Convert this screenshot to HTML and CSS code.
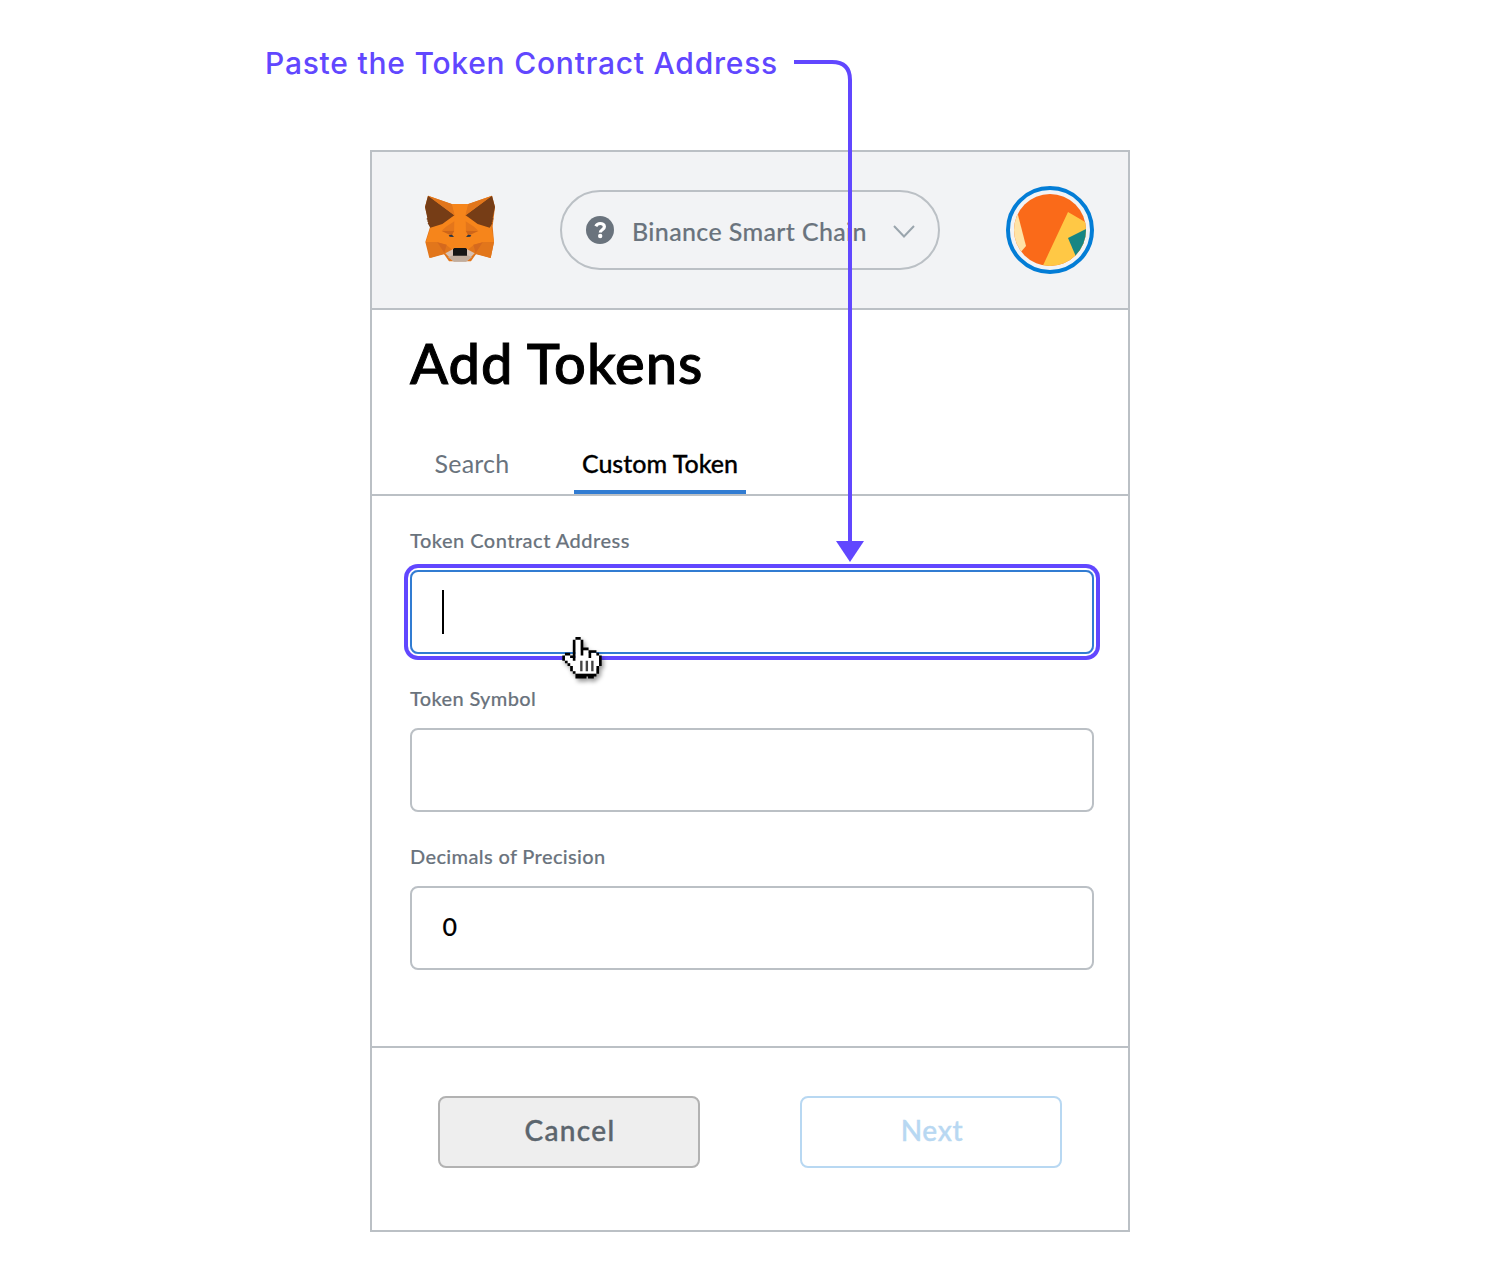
FILE: index.html
```html
<!DOCTYPE html>
<html lang="en">
<head>
<meta charset="utf-8">
<title>Add Tokens</title>
<link rel="stylesheet" href="styles.css">
</head>
<body>
<p class="caption">Paste the Token Contract Address</p>
<main class="wallet">
  <header class="topbar">
    <svg class="fox" viewBox="45 45 210 201">
      <path fill="#e2761b" d="M54 47 125 72h50l71-25 9 34-7 58 4 47-10 48-43-13-16 23h-66l-16-23-43 13-12-48 14-45-15-60z"/>
      <path fill="#f6851b" d="M125 72h50l-9 35 78 34 8 45-34 1-26 7-20 16h-44l-20-16-26-7-34-1 14-45 72-35z"/>
      <path fill="#763d16" d="m54 47 79 59-36 26-36 11-8-13 2-4-4-2 2-4-4-3 3-3-7-33zm192 0-79 59 36 26 36 11 8-13-2-4 4-2-2-4 4-3-3-3 7-33z"/>
      <path fill="#e2761b" d="m54 47 71 25 8 34zM246 47l-71 25-8 34zM48 186h34l26 35-47 13zm204 0h-34l-26 35 50 13z"/>
      <path fill="#d5691e" d="M82 187l28 7-7 25zm136 0-28 7 7 25z"/>
      <path fill="#e4761b" d="m108 140 25-16v28H95zm84 0-25-16v28h38z"/>
      <path fill="#ce6518" d="m95 153 38-1-8 15zm110 0-38-1 8 15z"/>
      <path fill="#f6851b" d="M135 105h30l4 102h-38z"/>
      <path fill="#d7c1b3" d="m106 220 25-14h38l25 14-26 25h-36z"/>
      <path fill="#c0ad9e" d="m114 232 16-7h41l15 7-18 13h-36z"/>
      <path fill="#233447" d="m116 166 10-2 6 7-13-1zm68 0-10-2-6 7 13-1z"/>
      <path fill="#161616" d="m133 204 34 0 4 3v20h-42v-20z"/>
    </svg>
    <div class="network">
      <svg class="help" viewBox="0 0 28 28"><circle cx="14" cy="14" r="14" fill="#6a737d"/><path d="M9.8 10.2C10.8 8.2 12.2 7.5 14.2 7.5c2.2 0 4.2 1.2 4.2 3.2 0 3.1-4.1 2.9-4.1 5.8" fill="none" stroke="#fff" stroke-width="3.2"/><circle cx="14.2" cy="20" r="2.2" fill="#fff"/></svg>
      <span class="network-name">Binance Smart Chain</span>
      <svg class="chevron" viewBox="0 0 22 13"><path d="m1 1 10 10.5L21 1" fill="none" stroke="#9aa5ad" stroke-width="2"/></svg>
    </div>
    <svg class="avatar" viewBox="0 0 88 88">
      <defs><clipPath id="face"><circle cx="44" cy="44" r="36"/></clipPath></defs>
      <circle cx="44" cy="44" r="42" fill="#f2f3f5" stroke="#037dd6" stroke-width="4"/>
      <g clip-path="url(#face)"><path fill="#fa6a19" d="M0 0h88v88H0z"/><path fill="#ffe3a5" d="M0 14h7l5 15 8 31-6 7L0 80z"/><path fill="#ffc845" d="m62 26 26 15v47H33z"/><path fill="#168684" d="m62 52 26-13v44l-17-10z"/></g>
    </svg>
  </header>
  <h1 class="title">Add Tokens</h1>
  <nav class="tabs">
    <span class="tab">Search</span>
    <span class="tab active">Custom Token</span>
  </nav>
  <section class="form">
    <label class="label address-label">Token Contract Address</label>
    <div class="field focused"><span class="caret"></span></div>
    <label class="label symbol-label">Token Symbol</label>
    <div class="field"></div>
    <label class="label decimals-label">Decimals of Precision</label>
    <div class="field"><span class="value">0</span></div>
  </section>
  <footer class="actions">
    <button class="button cancel">Cancel</button>
    <button class="button next">Next</button>
  </footer>
</main>
<svg class="arrow" viewBox="0 0 72 504"><path d="M0 4h38q18 0 18 18v462" fill="none" stroke="#6147ff" stroke-width="4"/><path d="M42 483h28L56 504z" fill="#6147ff"/></svg>
<svg class="cursor" viewBox="0 0 15 16">
  <path fill="#fff" d="M5 1h2v4h3v1h3v1h1v5h-1v2H5v-1H4v-2H3v-1H2V9H1V7h2v1h2z"/>
  <path fill="#000" d="M5 0h2v1H5zM4 1h1v8H4V8H3V7h1zM7 1h1v3h2v1H8v2H7zM10 5h3v1h-2v2h-1zM13 6h1v1h-1zM14 7h1v4h-1zM13 11h1v3h-1zM1 6h2v1H1zM0 7h1v2H0zM1 9h1v1H1zM2 10h1v1H2zM3 11h1v2H3zM4 13h1v1H4zM5 14h8v1h-1v.8H9.8V15h-.6v.8H5z"/>
  <path fill="#444" d="M6.8 9h.9v4h-.9zM8.9 9h.9v4h-.9zM11 9h.9v4H11z"/>
</svg>
</body>
</html>
```
FILE: styles.css
```css
* { box-sizing: border-box; }
body {
  margin: 0;
  width: 1500px;
  height: 1272px;
  position: relative;
  background: #fff;
  font-family: Lato, "Open Sans", sans-serif;
  font-weight: 500;
}
.caption {
  margin: 0;
  padding: 40px 0 0 265px;
  height: 150px;
  font: 500 30px/46px Inter, sans-serif;
  letter-spacing: 0.77px;
  color: #6147ff;
  white-space: nowrap;
}
.wallet {
  width: 760px;
  height: 1082px;
  margin: 0 auto;
  border: 2px solid #bbc0c5;
  -webkit-text-stroke: 0.15px currentColor;
}
.topbar {
  height: 158px;
  padding: 0 34px 0 53px;
  display: flex;
  align-items: center;
  justify-content: space-between;
  background: #f2f3f5;
  border-bottom: 2px solid #bbc0c5;
}
.fox { width: 70px; height: 67px; margin-top: -3px; }
.network {
  width: 380px;
  height: 80px;
  margin-left: 1px;
  padding: 0 22px 0 24px;
  flex: none;
  display: flex;
  align-items: center;
  border: 2px solid #bbc0c5;
  border-radius: 40px;
}
.help { width: 28px; height: 28px; flex: none; }
.network-name {
  margin: 1px 0 0 18px;
  width: 235px;
  flex: none;
  font-size: 25px;
  letter-spacing: 0.36px;
  color: #6a737d;
  white-space: nowrap;
}
.chevron { width: 22px; height: 13px; margin: 2px 0 0 26px; flex: none; }
.avatar { width: 88px; height: 88px; margin-left: 2px; flex: none; }
.title {
  margin: 0;
  padding: 15px 0 0 38px;
  height: 124px;
  font-size: 56px;
  line-height: 76px;
  font-weight: 500;
  letter-spacing: 0.95px;
  -webkit-text-stroke: 1px currentColor;
}
.tabs {
  height: 62px;
  padding-left: 38px;
  display: flex;
  gap: 40px;
  border-bottom: 2px solid #bbc0c5;
}
.tab {
  width: 124px;
  height: 60px;
  padding-top: 13px;
  text-align: center;
  font-size: 25px;
  line-height: 32px;
  letter-spacing: 0.2px;
  color: #6a737d;
  font-weight: 400;
  white-space: nowrap;
  -webkit-text-stroke: 0;
}
.active {
  width: 172px;
  letter-spacing: 0;
  color: #000;
  font-weight: 500;
  border-bottom: 4px solid #317cd2;
  -webkit-text-stroke: 0.3px currentColor;
}
.form {
  height: 552px;
  padding: 30px 34px 0 38px;
  border-bottom: 2px solid #bbc0c5;
}
.label {
  display: block;
  height: 28px;
  margin-bottom: 16px;
  font-size: 20px;
  line-height: 28px;
  color: #6a737d;
}
.address-label { letter-spacing: 0.48px; }
.symbol-label { letter-spacing: 0.34px; }
.decimals-label { letter-spacing: 0.36px; }
.field {
  width: 684px;
  height: 84px;
  margin-bottom: 30px;
  padding-left: 30px;
  display: flex;
  align-items: center;
  border: 2px solid #bbc0c5;
  border-radius: 8px;
}
.focused {
  border-color: #317cd2;
  box-shadow: 0 0 0 2px #fff, 0 0 0 6px #6147ff;
}
.caret { width: 2px; height: 44px; background: #000; }
.value { margin: -4px 0 0 0.5px; font-size: 25px; }
.actions { display: flex; justify-content: space-between; padding: 48px 66px 0; }
.button {
  width: 262px;
  height: 72px;
  padding: 0 0 5px 2px;
  border: 2px solid #b2b2b2;
  border-radius: 8px;
  font: 500 28px Lato, sans-serif;
  -webkit-text-stroke: 0.4px currentColor;
}
.cancel { background: #eee; color: #5b656d; letter-spacing: 1.3px; }
.next { background: #fff; color: #b8d8f2; border-color: #b8d8f2; letter-spacing: 0.7px; }
.arrow { position: absolute; left: 794px; top: 58px; width: 72px; height: 504px; }
.cursor {
  position: absolute;
  left: 562px;
  top: 637px;
  width: 40px;
  height: 42px;
  filter: drop-shadow(2px 3px 2px #0006);
}
```
